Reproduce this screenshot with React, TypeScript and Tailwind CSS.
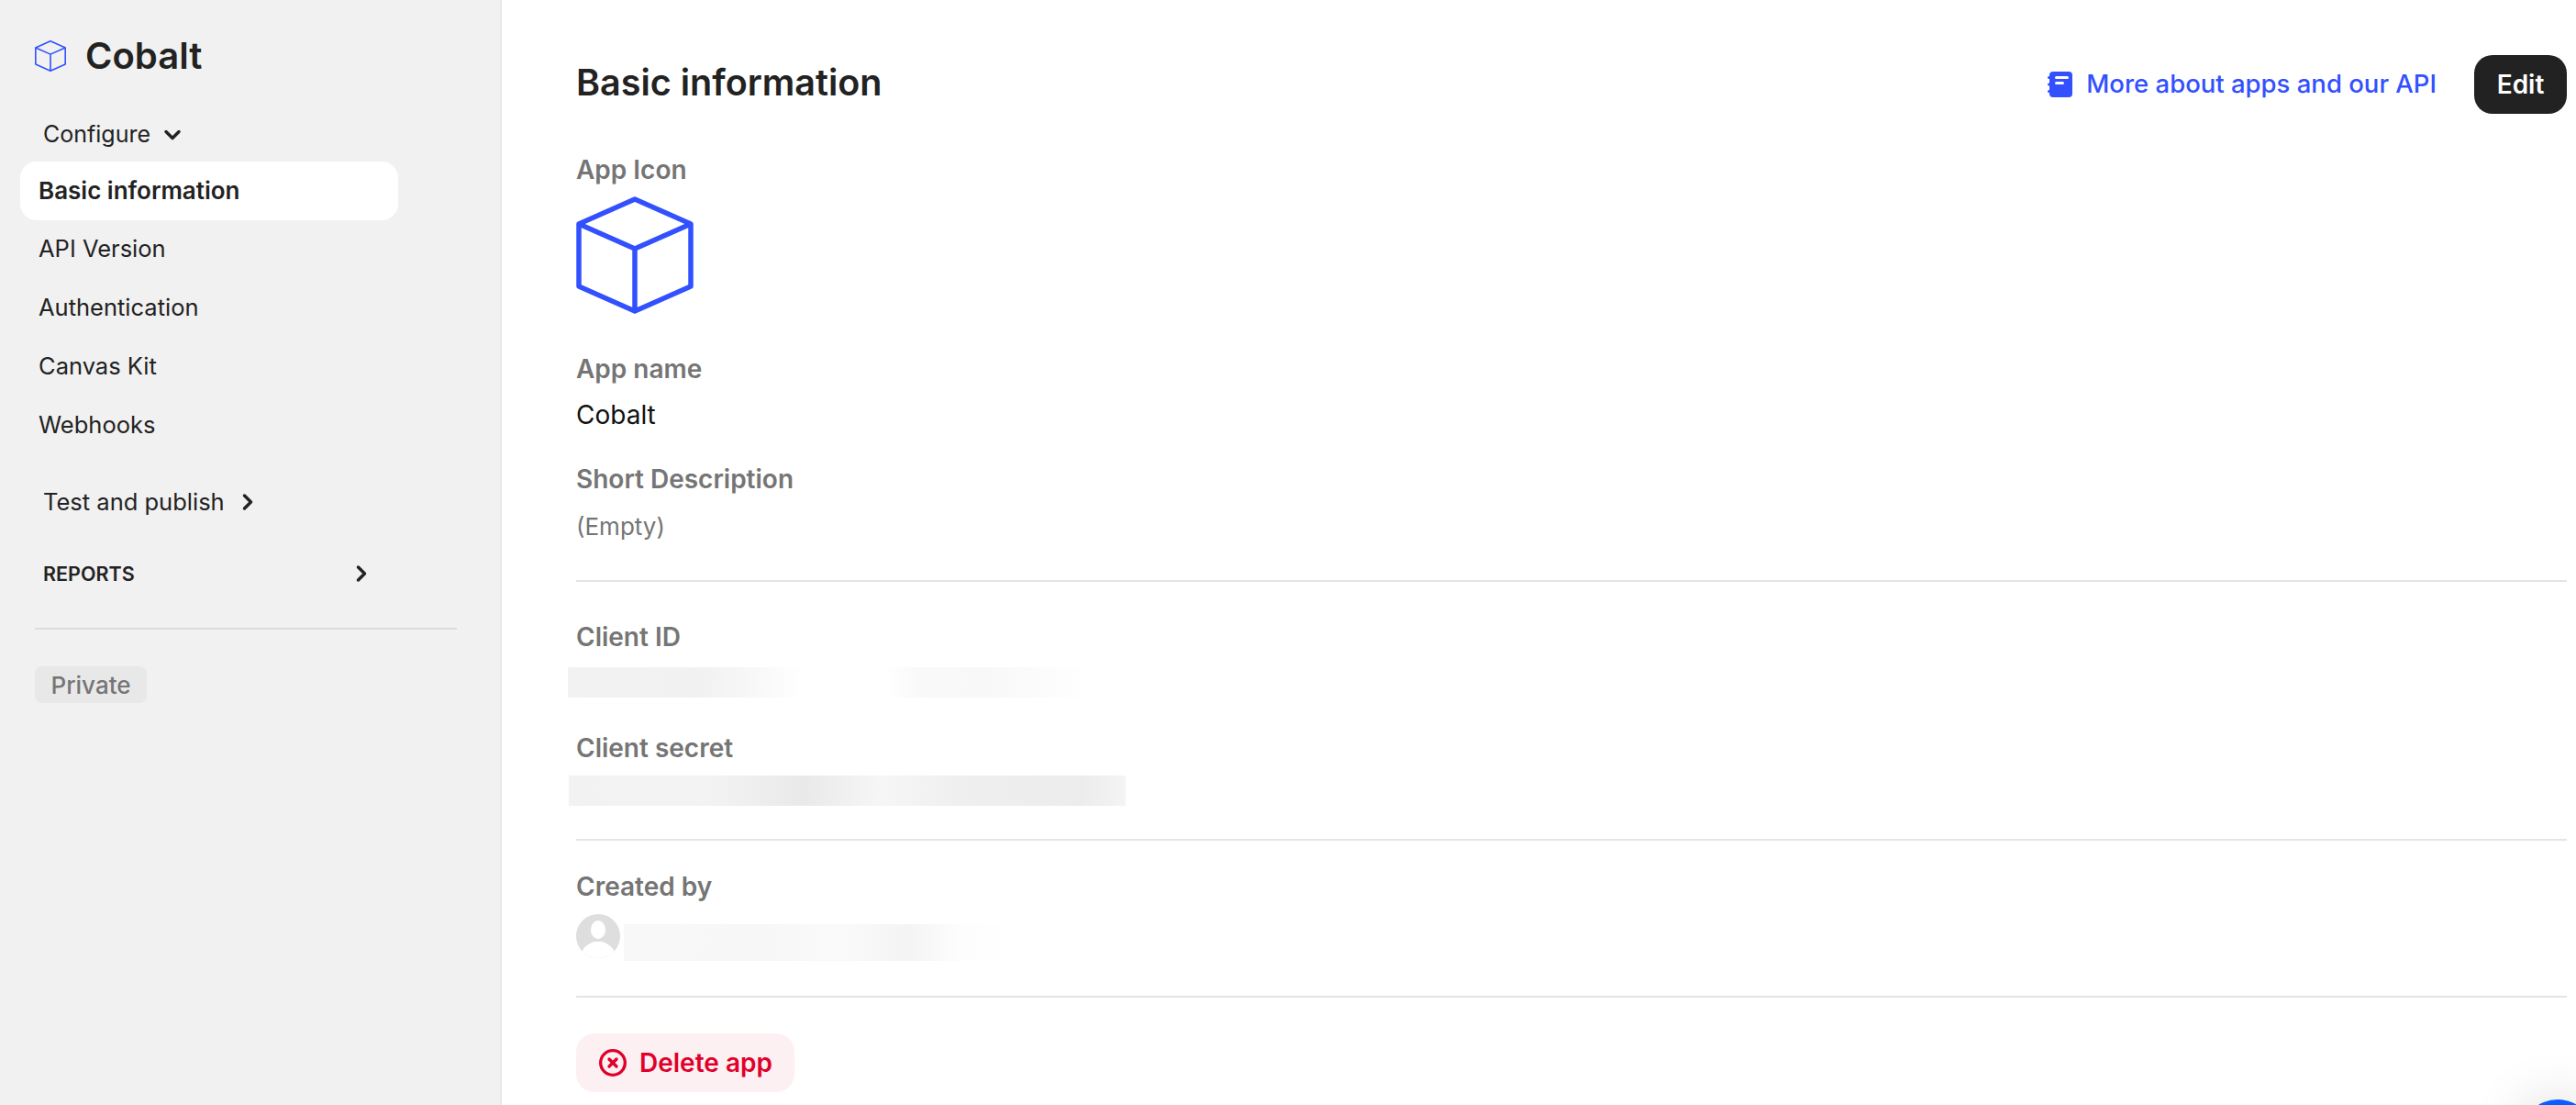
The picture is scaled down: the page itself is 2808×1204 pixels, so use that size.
import { ChevronDown, ChevronRight, CircleX } from "lucide-react";

const navItems = ["API Version", "Authentication", "Canvas Kit", "Webhooks"];

function CubeIcon({ className, strokeWidth }: { className: string; strokeWidth: number }) {
  return (
    <svg viewBox="0 0 128 128" fill="none" className={className}>
      <path
        d="M64 3 L125 30 L125 98 L64 125 L3 98 L3 30 Z M3 30 L64 57 L125 30 M64 57 L64 125"
        stroke="#3350ff"
        strokeWidth={strokeWidth}
        strokeLinejoin="round"
      />
    </svg>
  );
}

function NotebookIcon() {
  return (
    <svg viewBox="0 0 27 28" className="w-[27px] h-[28px]">
      <rect x="2" y="0" width="25" height="28" rx="4" fill="#3350ff" />
      <rect x="0" y="5" width="5" height="3" rx="1.5" fill="#3350ff" />
      <rect x="0" y="12.5" width="5" height="3" rx="1.5" fill="#3350ff" />
      <rect x="0" y="20" width="5" height="3" rx="1.5" fill="#3350ff" />
      <rect x="8" y="5" width="15" height="3" rx="1.5" fill="#fff" />
      <rect x="8" y="11" width="10" height="3" rx="1.5" fill="#fff" />
    </svg>
  );
}

function AvatarIcon() {
  return (
    <svg viewBox="0 0 48 48" className="w-[48px] h-[48px] shrink-0">
      <defs>
        <clipPath id="avatar-clip">
          <circle cx="24" cy="24" r="24" />
        </clipPath>
      </defs>
      <g clipPath="url(#avatar-clip)">
        <rect width="48" height="48" fill="#dedede" />
        <ellipse cx="24" cy="17" rx="8" ry="10" fill="#fff" />
        <path d="M5 48 C5 36 14 32 20 30 L28 30 C34 32 43 36 43 48 Z" fill="#fff" />
      </g>
    </svg>
  );
}

function FieldLabel({ children }: { children: string }) {
  return <div className="h-[40px] flex items-center text-[28px] font-semibold text-[#757575]">{children}</div>;
}

function Divider() {
  return <div className="h-[2px] bg-[#e4e4e4]" />;
}

export default function App() {
  return (
    <div className="flex h-[1204px] overflow-hidden bg-white text-[#222] font-['Inter',sans-serif] relative">
      {/* Sidebar */}
      <aside className="w-[547px] shrink-0 bg-[#f1f1f1] border-r-2 border-[#e8e8e8] pt-[39px]">
        <div className="flex items-center h-[44px] pl-[38px]">
          <CubeIcon className="w-[34px] h-[34px]" strokeWidth={6} />
          <span className="ml-[21px] text-[40px] font-semibold leading-none">Cobalt</span>
        </div>

        <div className="flex items-center h-[40px] mt-[44px] pl-[47px] text-[25px]">
          Configure
          <ChevronDown className="ml-[10px] w-[28px] h-[28px]" strokeWidth={3} />
        </div>

        <div className="mt-[9px] ml-[22px] w-[412px] h-[64px] flex items-center pl-[20px] pb-[2px] rounded-[18px] bg-white text-[26px] font-semibold">
          Basic information
        </div>
        {navItems.map((item) => (
          <div key={item} className="h-[64px] ml-[22px] flex items-center pl-[20px] pb-[2px] text-[25.5px]">
            {item}
          </div>
        ))}

        <div className="flex items-center h-[40px] mt-[31px] pl-[47px] text-[25.5px]">
          Test and publish
          <ChevronRight className="ml-[11px] w-[28px] h-[28px]" strokeWidth={3} />
        </div>

        <div className="flex items-center justify-between h-[40px] mt-[38px] pl-[47px] w-[408px] text-[21.5px] font-semibold">
          REPORTS
          <ChevronRight className="w-[28px] h-[28px]" strokeWidth={3} />
        </div>

        <div className="h-[2px] mt-[39px] ml-[38px] w-[460px] bg-[#dcdcdc]" />

        <div className="mt-[40px] ml-[38px] w-[122px] h-[40px] flex items-center justify-center rounded-[8px] bg-[#e8e8e8] text-[#757575] text-[26px] font-medium">
          Private
        </div>
      </aside>

      {/* Main */}
      <main className="flex-1 pl-[81px] pr-[10px]">
        <div className="flex items-center justify-between h-[64px] mt-[60px]">
          <h1 className="text-[39.5px] font-semibold pb-[3px]">Basic information</h1>
          <div className="flex items-center">
            <NotebookIcon />
            <span className="ml-[15px] text-[27.5px] font-medium text-[#3350ff]">More about apps and our API</span>
            <button className="ml-[41px] w-[101px] h-[64px] rounded-[20px] bg-[#222] text-white text-[28px] font-semibold">
              Edit
            </button>
          </div>
        </div>

        <div className="mt-[41px]">
          <FieldLabel>App Icon</FieldLabel>
          <CubeIcon className="w-[128px] h-[128px] mt-[9px]" strokeWidth={5.5} />
        </div>

        <div className="mt-[40px]">
          <FieldLabel>App name</FieldLabel>
          <div className="mt-[10px] h-[40px] flex items-center text-[28px] text-[#111]">Cobalt</div>
        </div>

        <div className="mt-[30px]">
          <FieldLabel>Short Description</FieldLabel>
          <div className="mt-[11px] h-[40px] flex items-center text-[26px] text-[#757575]">(Empty)</div>
        </div>

        <div className="mt-[39px]">
          <Divider />
        </div>

        <div className="mt-[40px]">
          <FieldLabel>Client ID</FieldLabel>
          <div className="mt-[13px] -ml-[9px] w-[570px] h-[33px] bg-[linear-gradient(90deg,#f2f2f2_0%,#f1f1f1_25%,#f6f6f6_33%,#ffffff_45%,#ffffff_61%,#f9f9f9_67%,#f8f8f8_80%,#ffffff_100%)]" />
        </div>

        <div className="mt-[35px]">
          <FieldLabel>Client secret</FieldLabel>
          <div className="mt-[10px] -ml-[8px] w-[607px] h-[33px] bg-[linear-gradient(90deg,#f2f2f2_0%,#f3f3f3_25%,#e9e9e9_42%,#f6f6f6_56%,#efefef_70%,#ececec_92%,#f4f4f4_100%)]" />
        </div>

        <div className="mt-[36px]">
          <Divider />
        </div>

        <div className="mt-[30px]">
          <FieldLabel>Created by</FieldLabel>
          <div className="flex items-start mt-[10px]">
            <AvatarIcon />
            <div className="ml-[4px] mt-[11px] w-[430px] h-[40px] bg-[linear-gradient(90deg,#f8f8f8_0%,#f7f7f7_35%,#fafafa_55%,#f4f4f4_72%,#fdfdfd_85%,#ffffff_100%)]" />
          </div>
        </div>

        <div className="mt-[38px]">
          <Divider />
        </div>

        <button className="mt-[39px] w-[238px] h-[64px] flex items-center pl-[24px] rounded-[20px] bg-[#fdf0f2] text-[#e0002b] text-[28px] font-semibold">
          <CircleX className="w-[32px] h-[32px]" strokeWidth={2.5} />
          <span className="ml-[13px]">Delete app</span>
        </button>
      </main>

      {/* Chat bubble */}
      <div className="absolute left-[2748px] top-[1198px] w-[80px] h-[80px] rounded-full bg-[#0b5cff] shadow-[0_0_60px_rgba(0,0,0,0.15)]" />
    </div>
  );
}
